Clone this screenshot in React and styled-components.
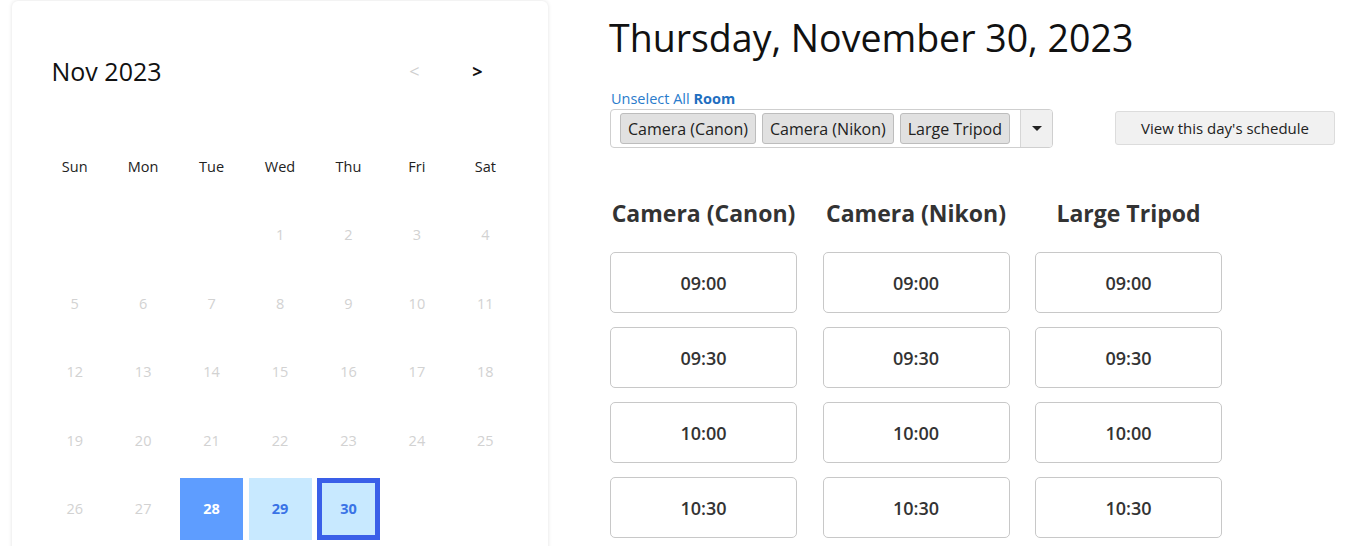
import React from "react";
import styled, { createGlobalStyle, css } from "styled-components";

const Global = createGlobalStyle`
  html, body { margin: 0; padding: 0; background: #fff; }
  body { font-family: "Open Sans", "Noto Sans", sans-serif; color: #222; }
  * { box-sizing: border-box; }
`;

const Page = styled.div`
  display: flex;
  align-items: flex-start;
  padding: 1px 16px 0 12px;
  gap: 62px;
`;

const Card = styled.div`
  width: 536px;
  height: 580px;
  flex: none;
  background: #fff;
  border-radius: 6px;
  box-shadow: 0 0 4px rgba(0, 0, 0, 0.12);
  padding: 50px 29px 0 28.5px;
`;

const CalHeader = styled.div`
  display: flex;
  align-items: center;
  height: 40px;
  padding: 0 10px 0 11px;
`;

const MonthTitle = styled.div`
  font-size: 25px;
  color: #111;
  flex: 1;
`;

const NavBtn = styled.span`
  width: 63px;
  text-align: center;
  font-size: 18px;
  font-weight: ${(p) => (p.disabled ? 400 : 700)};
  color: ${(p) => (p.disabled ? "#cfcfcf" : "#111")};
`;

const Grid = styled.div`
  margin-top: 41px;
  display: grid;
  grid-template-columns: repeat(7, 68.45px);
  grid-auto-rows: 68.5px;
`;

const WeekDay = styled.div`
  display: flex;
  align-items: center;
  justify-content: center;
  font-size: 14.5px;
  color: #222;
`;

const DayCell = styled.div`
  display: flex;
  align-items: center;
  justify-content: center;
`;

const Day = styled.div`
  width: 63px;
  height: 62px;
  display: flex;
  align-items: center;
  justify-content: center;
  font-size: 14.5px;
  color: #d2d2d2;
  ${(p) =>
    p.variant === "start" &&
    css`
      background: #5e9dff;
      color: #fff;
      font-weight: 700;
    `}
  ${(p) =>
    p.variant === "range" &&
    css`
      background: #c8e9ff;
      color: #3a73e6;
      font-weight: 700;
    `}
  ${(p) =>
    p.variant === "active" &&
    css`
      background: #c8e9ff;
      color: #3a73e6;
      font-weight: 700;
      border: 5px solid #3a5fe8;
    `}
`;

const Right = styled.div`
  flex: 1;
  padding-top: 13px;
`;

const DateTitle = styled.h1`
  margin: 0 0 0 -1px;
  font-size: 37.5px;
  font-weight: 400;
  line-height: 48px;
  color: #111;
`;

const FilterRow = styled.div`
  margin-top: 27px;
  display: flex;
  align-items: flex-end;
  justify-content: space-between;
`;

const FilterBlock = styled.div`
  display: flex;
  flex-direction: column;
`;

const FilterLabel = styled.div`
  font-size: 14.5px;
  line-height: 20px;
  color: #2a7ccc;
  margin-left: 1px;
  b { font-weight: 700; color: #1f6fc0; }
`;

const SelectBox = styled.div`
  width: 443px;
  height: 39px;
  border: 1px solid #cfcfcf;
  border-radius: 4px;
  display: flex;
  align-items: center;
  padding-left: 9px;
`;

const Chips = styled.div`
  flex: 1;
  display: flex;
  gap: 6px;
`;

const Chip = styled.span`
  height: 31px;
  display: inline-flex;
  align-items: center;
  padding: 0 7px;
  font-size: 16px;
  color: #222;
  background: #e1e1e1;
  border: 1px solid #bdbdbd;
  border-radius: 3px;
`;

const Toggle = styled.div`
  width: 32px;
  align-self: stretch;
  border-left: 1px solid #d6d6d6;
  background: #f0f0f0;
  border-radius: 0 3px 3px 0;
  display: flex;
  align-items: center;
  justify-content: center;
`;

const Caret = styled.span`
  width: 0;
  height: 0;
  border-left: 5px solid transparent;
  border-right: 5px solid transparent;
  border-top: 5px solid #222;
`;

const ViewButton = styled.button`
  width: 220px;
  height: 34px;
  margin-bottom: 3px;
  font-family: inherit;
  font-size: 15px;
  color: #222;
  background: #f1f1f1;
  border: 1px solid #dcdcdc;
  border-radius: 3px;
`;

const Columns = styled.div`
  margin-top: 50px;
  display: flex;
  gap: 25.5px;
`;

const Column = styled.div`
  width: 187px;
  display: flex;
  flex-direction: column;
  gap: 14px;
`;

const ColTitle = styled.div`
  text-align: center;
  white-space: nowrap;
  font-size: 23px;
  font-weight: 700;
  color: #333;
  line-height: 30px;
  margin-bottom: 10px;
`;

const Slot = styled.div`
  height: 61px;
  border: 1px solid #c8c8c8;
  border-radius: 5px;
  display: flex;
  align-items: center;
  justify-content: center;
  font-size: 18px;
  font-weight: 600;
  color: #333;
`;

const weekdays = ["Sun", "Mon", "Tue", "Wed", "Thu", "Fri", "Sat"];
const rooms = ["Camera (Canon)", "Camera (Nikon)", "Large Tripod"];
const times = ["09:00", "09:30", "10:00", "10:30"];

const variantFor = (d) =>
  d === 28 ? "start" : d === 29 ? "range" : d === 30 ? "active" : undefined;

export default function App() {
  const cells = [];
  for (let i = 0; i < 3; i++) cells.push(null);
  for (let d = 1; d <= 30; d++) cells.push(d);

  return (
    <>
      <Global />
      <Page>
        <Card>
          <CalHeader>
            <MonthTitle>Nov 2023</MonthTitle>
            <NavBtn disabled>&lt;</NavBtn>
            <NavBtn>&gt;</NavBtn>
          </CalHeader>
          <Grid>
            {weekdays.map((w) => (
              <WeekDay key={w}>{w}</WeekDay>
            ))}
            {cells.map((d, i) => (
              <DayCell key={i}>
                {d && <Day variant={variantFor(d)}>{d}</Day>}
              </DayCell>
            ))}
          </Grid>
        </Card>
        <Right>
          <DateTitle>Thursday, November 30, 2023</DateTitle>
          <FilterRow>
            <FilterBlock>
              <FilterLabel>
                Unselect All <b>Room</b>
              </FilterLabel>
              <SelectBox>
                <Chips>
                  {rooms.map((r) => (
                    <Chip key={r}>{r}</Chip>
                  ))}
                </Chips>
                <Toggle>
                  <Caret />
                </Toggle>
              </SelectBox>
            </FilterBlock>
            <ViewButton>View this day's schedule</ViewButton>
          </FilterRow>
          <Columns>
            {rooms.map((r) => (
              <Column key={r}>
                <ColTitle>{r}</ColTitle>
                {times.map((t) => (
                  <Slot key={t}>{t}</Slot>
                ))}
              </Column>
            ))}
          </Columns>
        </Right>
      </Page>
    </>
  );
}
